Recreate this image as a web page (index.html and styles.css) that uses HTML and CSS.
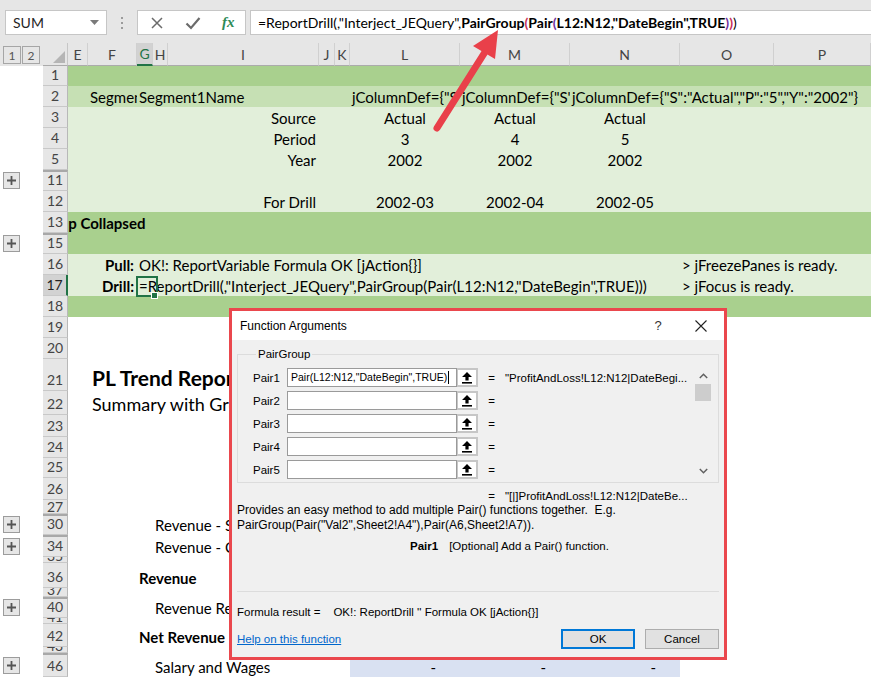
FILE: index.html
```html
<!DOCTYPE html>
<html lang="en">
<head>
<meta charset="utf-8">
<title>Function Arguments - PairGroup</title>
<link rel="stylesheet" href="styles.css">
</head>
<body>
<div class="fbar">
  <div class="namebox"><span>SUM</span><svg width="9" height="5" viewBox="0 0 9 5"><path d="M0 0h9L4.5 5z" fill="#7a7a7a"/></svg></div>
  <div class="grip"><i></i><i></i><i></i></div>
  <div class="fxbox">
    <svg width="14" height="14" viewBox="0 0 14 14"><path d="M2 2L12 12M12 2L2 12" stroke="#6b6b6b" stroke-width="1.5" fill="none"/></svg>
    <svg width="16" height="14" viewBox="0 0 16 14"><path d="M1.5 7.5L6 12L14.5 2" stroke="#6b6b6b" stroke-width="2.2" fill="none"/></svg>
    <span class="fx">fx</span>
  </div>
  <div class="formula">=ReportDrill(,"Interject_JEQuery",<b>PairGroup<span class="pk">(</span>Pair<span class="pp">(</span>L12:N12,"DateBegin",TRUE<span class="pp">)</span><span class="pk">)</span></b>)</div>
</div>

<div class="row hdr">
  <div class="olh"><span class="lvl">1</span><span class="lvl">2</span></div>
  <div class="corner"><svg width="12" height="12" viewBox="0 0 12 12"><path d="M12 0V12H0z" fill="#b5b5b5"/></svg></div>
  <div class="ch cE">E</div>
  <div class="ch cF">F</div>
  <div class="ch cG on">G</div>
  <div class="ch cH">H</div>
  <div class="ch cI">I</div>
  <div class="ch cJ">J</div>
  <div class="ch cK">K</div>
  <div class="ch cL">L</div>
  <div class="ch cM">M</div>
  <div class="ch cN">N</div>
  <div class="ch cO">O</div>
  <div class="ch cP">P</div>
</div>

<div class="row h20 dark"><div class="ol"></div><div class="rh"><span>1</span></div></div>
<div class="row h21 mid"><div class="ol"></div><div class="rh"><span>2</span></div>
  <div class="c cF clip">Segment</div>
  <div class="c cG">Segment1Name</div>
  <div class="c cL clip">jColumnDef={"S":"Actual","P":"3","Y":"2002"}</div>
  <div class="c cM clip">jColumnDef={"S":"Actual","P":"4","Y":"2002"}</div>
  <div class="c cN">jColumnDef={"S":"Actual","P":"5","Y":"2002"}</div>
</div>
<div class="row h21 light"><div class="ol"></div><div class="rh"><span>3</span></div>
  <div class="c cI r">Source</div><div class="c cL m">Actual</div><div class="c cM m">Actual</div><div class="c cN m">Actual</div>
</div>
<div class="row h21 light"><div class="ol"></div><div class="rh"><span>4</span></div>
  <div class="c cI r">Period</div><div class="c cL m">3</div><div class="c cM m">4</div><div class="c cN m">5</div>
</div>
<div class="row h21 light"><div class="ol"></div><div class="rh"><span>5</span></div>
  <div class="c cI r">Year</div><div class="c cL m">2002</div><div class="c cM m">2002</div><div class="c cN m">2002</div>
</div>
<div class="row h21 light"><div class="ol"><span class="plus"><svg width="9" height="9" viewBox="0 0 9 9"><path d="M0 4.5H9M4.5 0V9" stroke="#555" stroke-width="1.8"/></svg></span></div><div class="rh gap"><span>11</span></div></div>
<div class="row h21 light"><div class="ol"></div><div class="rh"><span>12</span></div>
  <div class="c cI r">For Drill</div><div class="c cL m">2002-03</div><div class="c cM m">2002-04</div><div class="c cN m">2002-05</div>
</div>
<div class="row h21 dark"><div class="ol"></div><div class="rh"><span>13</span></div>
  <div class="c cE b tail"><span>Group Collapsed</span></div>
</div>
<div class="row h21 dark"><div class="ol"><span class="plus"><svg width="9" height="9" viewBox="0 0 9 9"><path d="M0 4.5H9M4.5 0V9" stroke="#555" stroke-width="1.8"/></svg></span></div><div class="rh gap"><span>15</span></div></div>
<div class="row h21 light"><div class="ol"></div><div class="rh"><span>16</span></div>
  <div class="c cF r b">Pull:</div>
  <div class="c cG">OK!: ReportVariable Formula OK [jAction{}]</div>
  <div class="c cO">&gt; jFreezePanes is ready.</div>
</div>
<div class="row h21 light"><div class="ol"></div><div class="rh on"><span>17</span></div>
  <div class="c cF r b">Drill:</div>
  <div class="c cG selc">=ReportDrill(,"Interject_JEQuery",PairGroup(Pair(L12:N12,"DateBegin",TRUE)))</div>
  <div class="c cO">&gt; jFocus is ready.</div>
</div>
<div class="row h21 dark"><div class="ol"></div><div class="rh"><span>18</span></div></div>
<div class="row h21"><div class="ol"></div><div class="rh"><span>19</span></div></div>
<div class="row h21"><div class="ol"></div><div class="rh"><span>20</span></div></div>
<div class="row h32"><div class="ol"></div><div class="rh"><span>21</span></div>
  <div class="c cF title">PL Trend Report</div>
</div>
<div class="row h24"><div class="ol"></div><div class="rh"><span>22</span></div>
  <div class="c cF sub">Summary with Gross Margin</div>
</div>
<div class="row h22"><div class="ol"></div><div class="rh"><span>23</span></div></div>
<div class="row h21"><div class="ol"></div><div class="rh"><span>24</span></div></div>
<div class="row h20"><div class="ol"></div><div class="rh"><span>25</span></div></div>
<div class="row h22"><div class="ol"></div><div class="rh"><span>26</span></div></div>
<div class="row h14"><div class="ol"></div><div class="rh sq"><span>27</span></div></div>
<div class="row h21"><div class="ol"><span class="plus"><svg width="9" height="9" viewBox="0 0 9 9"><path d="M0 4.5H9M4.5 0V9" stroke="#555" stroke-width="1.8"/></svg></span></div><div class="rh gap"><span>30</span></div>
  <div class="c cH">Revenue - Sales</div>
</div>
<div class="row h22"><div class="ol"><span class="plus"><svg width="9" height="9" viewBox="0 0 9 9"><path d="M0 4.5H9M4.5 0V9" stroke="#555" stroke-width="1.8"/></svg></span></div><div class="rh gap"><span>34</span></div>
  <div class="c cH">Revenue - Consulting</div>
</div>
<div class="row h6"><div class="ol"></div><div class="rh sq"><span>35</span></div></div>
<div class="row h25"><div class="ol"></div><div class="rh"><span>36</span></div>
  <div class="c cG b">Revenue</div>
</div>
<div class="row h9"><div class="ol"></div><div class="rh sq"><span>37</span></div></div>
<div class="row h21"><div class="ol"><span class="plus"><svg width="9" height="9" viewBox="0 0 9 9"><path d="M0 4.5H9M4.5 0V9" stroke="#555" stroke-width="1.8"/></svg></span></div><div class="rh gap"><span>40</span></div>
  <div class="c cH">Revenue Returns</div>
</div>
<div class="row h6"><div class="ol"></div><div class="rh sq"><span>41</span></div></div>
<div class="row h23"><div class="ol"></div><div class="rh"><span>42</span></div>
  <div class="c cG b">Net Revenue</div>
</div>
<div class="row h6"><div class="ol"></div><div class="rh sq"><span>43</span></div></div>
<div class="row h24"><div class="ol"><span class="plus"><svg width="9" height="9" viewBox="0 0 9 9"><path d="M0 4.5H9M4.5 0V9" stroke="#555" stroke-width="1.8"/></svg></span></div><div class="rh gap"><span>46</span></div>
  <div class="c cH">Salary and Wages</div>
  <div class="lav cL">-</div><div class="lav cM">-</div><div class="lav cN">-</div>
</div>

<div class="dialog">
  <div class="dtitle">
    <span class="dt">Function Arguments</span>
    <span class="q">?</span>
    <svg class="xbtn" width="12" height="12" viewBox="0 0 12 12"><path d="M0.5 0.5L11.5 11.5M11.5 0.5L0.5 11.5" stroke="#222" stroke-width="1.1" fill="none"/></svg>
  </div>
  <div class="dbody">
    <fieldset class="grp">
      <legend>PairGroup</legend>
      <div class="args">
        <div class="arglist">
          <div class="arg"><span class="an">Pair1</span><span class="inp focus">Pair(L12:N12,"DateBegin",TRUE)<i class="cur"></i></span><span class="ref"><svg width="10" height="12" viewBox="0 0 10 12"><path d="M5 0L10 5H6.6V8.5H3.4V5H0z" fill="#000"/><rect x="0" y="10" width="10" height="1.6" fill="#000"/></svg></span><span class="eq">=</span><span class="av">"ProfitAndLoss!L12:N12|DateBegi...</span></div>
          <div class="arg"><span class="an">Pair2</span><span class="inp"></span><span class="ref"><svg width="10" height="12" viewBox="0 0 10 12"><path d="M5 0L10 5H6.6V8.5H3.4V5H0z" fill="#000"/><rect x="0" y="10" width="10" height="1.6" fill="#000"/></svg></span><span class="eq">=</span></div>
          <div class="arg"><span class="an">Pair3</span><span class="inp"></span><span class="ref"><svg width="10" height="12" viewBox="0 0 10 12"><path d="M5 0L10 5H6.6V8.5H3.4V5H0z" fill="#000"/><rect x="0" y="10" width="10" height="1.6" fill="#000"/></svg></span><span class="eq">=</span></div>
          <div class="arg"><span class="an">Pair4</span><span class="inp"></span><span class="ref"><svg width="10" height="12" viewBox="0 0 10 12"><path d="M5 0L10 5H6.6V8.5H3.4V5H0z" fill="#000"/><rect x="0" y="10" width="10" height="1.6" fill="#000"/></svg></span><span class="eq">=</span></div>
          <div class="arg"><span class="an">Pair5</span><span class="inp"></span><span class="ref"><svg width="10" height="12" viewBox="0 0 10 12"><path d="M5 0L10 5H6.6V8.5H3.4V5H0z" fill="#000"/><rect x="0" y="10" width="10" height="1.6" fill="#000"/></svg></span><span class="eq">=</span></div>
        </div>
        <div class="vscroll">
          <span class="sarrow"><svg width="9" height="6" viewBox="0 0 9 6"><path d="M0.8 5L4.5 1.3L8.2 5" stroke="#606060" stroke-width="1.5" fill="none"/></svg></span>
          <span class="thumb"></span>
          <span class="sfill"></span>
          <span class="sarrow"><svg width="9" height="6" viewBox="0 0 9 6"><path d="M0.8 1L4.5 4.7L8.2 1" stroke="#606060" stroke-width="1.5" fill="none"/></svg></span>
        </div>
      </div>
    </fieldset>
    <div class="res"><span class="eq">=</span><span class="av">"[|]ProfitAndLoss!L12:N12|DateBe...</span></div>
    <p class="desc">Provides an easy method to add multiple Pair() functions together.&nbsp; E.g.<br>PairGroup(Pair("Val2",Sheet2!A4"),Pair(A6,Sheet2!A7)).</p>
    <div class="argdesc"><b>Pair1</b><span>[Optional] Add a Pair() function.</span></div>
    <div class="fres">Formula result =<span>OK!: ReportDrill '' Formula OK [jAction{}]</span></div>
    <div class="dfoot">
      <a class="help" href="#">Help on this function</a>
      <div class="btns"><button class="btn ok">OK</button><button class="btn">Cancel</button></div>
    </div>
  </div>
</div>

<svg class="annot" width="871" height="677" viewBox="0 0 871 677">
  <line x1="437" y1="128" x2="485" y2="52" stroke="#e9404a" stroke-width="7" stroke-linecap="round"/>
  <polygon points="498,30 473,46 495,59" fill="#e9404a"/>
</svg>
</body>
</html>
```

FILE: styles.css
```css
:root {
  --cols: 43px 25px 20px 49px 16px 15px 151px 16px 15px 110px 110px 110px 94px 97px;
}
* { box-sizing: border-box; }
html, body { margin: 0; }
body {
  width: 871px;
  height: 677px;
  overflow: hidden;
  position: relative;
  background: #fff;
  font-family: Lato, "Liberation Sans", Arial, sans-serif;
  color: #000;
}

/* formula bar */
.fbar {
  height: 43px;
  background: #e6e6e6;
  display: flex;
  align-items: flex-start;
  padding-top: 10px;
}
.namebox {
  margin-left: 5px;
  width: 102px;
  height: 25px;
  background: #fff;
  border: 1px solid #c6c6c6;
  display: flex;
  align-items: center;
  justify-content: space-between;
  padding: 0 7px;
  font-size: 14px;
  color: #262626;
}
.grip {
  width: 30px;
  height: 25px;
  display: flex;
  flex-direction: column;
  align-items: center;
  justify-content: center;
  gap: 3px;
}
.grip i { width: 2px; height: 2px; background: #9b9b9b; }
.fxbox {
  width: 109px;
  height: 25px;
  background: #fff;
  border: 1px solid #c6c6c6;
  display: flex;
  align-items: center;
  padding-left: 12px;
  gap: 21px;
}
.fx {
  font-family: "Liberation Serif", serif;
  font-style: italic;
  font-weight: bold;
  color: #2e8b57;
  font-size: 15px;
}
.formula {
  margin-left: 4px;
  flex: 1;
  height: 25px;
  background: #fff;
  border: 1px solid #c6c6c6;
  border-right: 0;
  padding-left: 7px;
  font-size: 14px;
  line-height: 23px;
  white-space: nowrap;
  overflow: hidden;
}
.pk { color: #c8305a; }
.pp { color: #7030a0; }

/* grid */
.row {
  display: grid;
  grid-template-columns: var(--cols);
  grid-template-rows: minmax(0, 1fr);
}
.row > * { grid-row: 1; min-width: 0; }
.h6 { height: 6px; } .h9 { height: 9px; } .h14 { height: 14px; }
.h20 { height: 20px; } .h21 { height: 21px; } .h22 { height: 22px; }
.h23 { height: 23px; } .h24 { height: 24px; } .h25 { height: 25px; }
.h32 { height: 32px; }
.dark { background: #a9d08e; }
.mid { background: #c6e0b4; }
.light { background: #e2efda; }

.hdr { height: 23px; background: #e6e6e6; }
.olh {
  grid-column: 1;
  display: flex;
  gap: 1px;
  padding: 3px 0 0 3px;
  align-items: flex-start;
}
.lvl {
  width: 18px;
  height: 18px;
  border: 1px solid #a6a6a6;
  background: #e6e6e6;
  font-size: 12px;
  color: #555;
  display: flex;
  align-items: center;
  justify-content: center;
}
.corner {
  grid-column: 2;
  display: flex;
  align-items: flex-end;
  justify-content: flex-end;
  padding: 0 2px 2px 0;
  border-right: 1px solid #c6c6c6;
  border-bottom: 1px solid #ababab;
}
.ch {
  display: flex;
  align-items: center;
  justify-content: center;
  font-size: 14px;
  color: #444;
  border-right: 1px solid #d0d0d0;
  border-bottom: 1px solid #ababab;
}
.ch.on {
  background: #d2d2d2;
  color: #217346;
  border-bottom: 2px solid #217346;
}

.ol {
  grid-column: 1;
  background: #fff;
  display: flex;
  align-items: center;
  padding-left: 3px;
}
.plus {
  width: 17px;
  height: 17px;
  border: 1px solid #9c9c9c;
  background: #e6e6e6;
  display: flex;
  align-items: center;
  justify-content: center;
}
.rh {
  grid-column: 2;
  background: #e6e6e6;
  border-bottom: 1px solid #c8c8c8;
  border-right: 1px solid #b8b8b8;
  display: flex;
  align-items: flex-end;
  justify-content: center;
  font-size: 14px;
  color: #444;
  line-height: 20px;
  overflow: hidden;
}
.rh.sq { line-height: 13px; }
.rh.gap { border-top: 2px solid #a8a8a8; }
.rh.on {
  background: #d2d2d2;
  color: #222;
  border-right: 2px solid #217346;
}

.cE { grid-column: 3; } .cF { grid-column: 4; } .cG { grid-column: 5; }
.cH { grid-column: 6; } .cI { grid-column: 7; } .cJ { grid-column: 8; }
.cK { grid-column: 9; } .cL { grid-column: 10; } .cM { grid-column: 11; }
.cN { grid-column: 12; } .cO { grid-column: 13; } .cP { grid-column: 14; }

.c {
  align-self: end;
  white-space: nowrap;
  font-size: 15px;
  line-height: 20px;
  padding: 0 2px;
}
.r { text-align: right; padding-right: 3px; }
.m { text-align: center; }
.b { font-weight: bold; }
.clip { overflow: hidden; }
.tail { clip-path: inset(0 -600px 0 0); }
.tail span { margin-left: -35px; }
.title { font-size: 21px; font-weight: bold; line-height: 26px; padding-left: 4px; }
.sub { font-size: 18px; line-height: 22px; padding-left: 4px; }
.selc { position: relative; z-index: 2; }
.selc::before {
  content: "";
  position: absolute;
  left: -1px;
  top: 0;
  width: 18px;
  bottom: -1px;
  border: 2px solid #217346;
}
.selc::after {
  content: "";
  position: absolute;
  left: 14px;
  bottom: -3px;
  width: 5px;
  height: 5px;
  background: #217346;
  border: 1px solid #fff;
}
.lav {
  background: #d9e1f2;
  display: flex;
  align-items: flex-end;
  justify-content: flex-end;
  padding-right: 24px;
  font-size: 15px;
  line-height: 20px;
}

/* dialog */
.dialog {
  position: absolute;
  left: 229px;
  top: 308px;
  width: 498px;
  height: 352px;
  border: 3px solid #ea474d;
  background: #f0f0f0;
  font-family: "Liberation Sans", Arial, sans-serif;
  font-size: 11.5px;
  color: #000;
  z-index: 5;
}
.dtitle {
  height: 29px;
  background: #fff;
  display: flex;
  align-items: center;
  padding-left: 8px;
  font-size: 12px;
}
.dt { flex: 1; }
.q { width: 12px; text-align: center; margin-right: 31px; font-size: 13px; color: #333; }
.xbtn { margin-right: 17px; }
.dbody { padding: 0 5px; }
.grp {
  margin: 7px 0 0;
  padding: 7px 7px 3px 15px;
  border: 1px solid #dcdcdc;
  min-width: 0;
}
.grp legend {
  padding: 0 2px;
  margin-left: 3px;
  line-height: 14px;
}
.args { display: flex; }
.arglist {
  flex: 1;
  display: flex;
  flex-direction: column;
  gap: 4px;
}
.arg { display: flex; align-items: center; height: 19px; }
.an { width: 34px; }
.inp {
  width: 170px;
  height: 19px;
  border: 1px solid #9a9a9a;
  background: #fff;
  padding-left: 3px;
  line-height: 17px;
  font-size: 10.5px;
  white-space: nowrap;
  overflow: hidden;
  display: flex;
  align-items: center;
}
.cur { display: inline-block; width: 1px; height: 13px; background: #000; margin-left: 1px; }
.ref {
  width: 21px;
  height: 19px;
  border: 2px solid #c6c6c6;
  border-left-width: 1px;
  background: #fff;
  display: flex;
  align-items: center;
  justify-content: center;
}
.eq { width: 15px; margin-left: 6px; text-align: center; }
.av { margin-left: 6px; white-space: nowrap; }
.vscroll {
  width: 16px;
  display: flex;
  flex-direction: column;
  align-items: stretch;
}
.sarrow { height: 16px; display: flex; align-items: center; justify-content: center; }
.thumb { height: 17px; background: #cdcdcd; }
.sfill { flex: 1; }
.res { margin-top: 6px; padding-left: 247px; line-height: 14px; display: flex; }
.res .eq { margin-left: 0; }
.desc { margin: 0; line-height: 15px; font-size: 12px; }
.argdesc { margin-top: 6px; line-height: 14px; padding-left: 173px; display: flex; gap: 11px; }
.fres {
  margin-top: 38px;
  border-top: 1px solid #dcdcdc;
  padding-top: 13px;
  line-height: 14px;
}
.fres span { margin-left: 13px; }
.dfoot {
  margin-top: 10px;
  display: flex;
  align-items: center;
  justify-content: space-between;
}
.help { color: #0066cc; text-decoration: underline; }
.btns { display: flex; gap: 10px; }
.btn {
  width: 74px;
  height: 20px;
  background: #e1e1e1;
  border: 1px solid #adadad;
  font-family: "Liberation Sans", Arial, sans-serif;
  font-size: 11.5px;
  color: #000;
  padding: 0;
}
.btn.ok { border: 2px solid #0078d7; }

.annot {
  position: absolute;
  left: 0;
  top: 0;
  pointer-events: none;
  z-index: 10;
}
```
